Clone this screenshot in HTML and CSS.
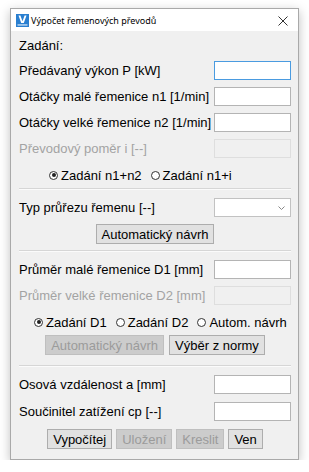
FILE: index.html
```html
<!DOCTYPE html>
<html lang="cs">
<head>
  <meta charset="UTF-8">
  <title>Výpočet řemenových převodů</title>
  <link rel="stylesheet" href="styles.css">
</head>
<body>
  <div class="okno">
    <div class="titulek">
      <svg class="ikona" width="13" height="13" viewBox="0 0 13 13">
        <rect x="0" y="0" width="13" height="13" fill="#2a7fd0"/>
        <path d="M2.5 1.5 L5.2 9 L7.8 9 L10.5 1.5 L8.6 1.5 L6.5 7.2 L4.4 1.5 Z" fill="#fff"/>
        <rect x="1.5" y="10.3" width="10" height="1.3" fill="#cfe3f7"/>
      </svg>
      <span class="nazev">Výpočet řemenových převodů</span>
      <span class="zavrit">
        <svg width="10" height="10" viewBox="0 0 10 10">
          <path d="M0.5 0.5 L9.5 9.5 M9.5 0.5 L0.5 9.5" stroke="#333" stroke-width="1"/>
        </svg>
      </span>
    </div>

    <div class="obsah">
      <div class="nadpis">Zadání:</div>

      <div class="radek">
        <label>Předávaný výkon P [kW]</label>
        <input type="text" class="pole aktivni">
      </div>
      <div class="radek">
        <label>Otáčky malé řemenice n1 [1/min]</label>
        <input type="text" class="pole">
      </div>
      <div class="radek">
        <label>Otáčky velké řemenice n2 [1/min]</label>
        <input type="text" class="pole">
      </div>
      <div class="radek vypnuto">
        <label>Převodový poměr i [--]</label>
        <input type="text" class="pole" disabled>
      </div>

      <div class="volby">
        <span class="volba prvni-n"><span class="kolecko zvoleno"></span>Zadání n1+n2</span>
        <span class="volba"><span class="kolecko"></span>Zadání n1+i</span>
      </div>

      <div class="oddel"></div>

      <div class="radek">
        <label>Typ průřezu řemenu [--]</label>
        <div class="vyber">
          <svg width="7" height="4" viewBox="0 0 7 4">
            <path d="M0.5 0.5 L3.5 3.5 L6.5 0.5" fill="none" stroke="#888" stroke-width="1"/>
          </svg>
        </div>
      </div>
      <div class="tlacitka">
        <button>Automatický návrh</button>
      </div>

      <div class="oddel"></div>

      <div class="radek">
        <label>Průměr malé řemenice D1 [mm]</label>
        <input type="text" class="pole">
      </div>
      <div class="radek vypnuto">
        <label>Průměr velké řemenice D2 [mm]</label>
        <input type="text" class="pole" disabled>
      </div>

      <div class="volby">
        <span class="volba prvni-d"><span class="kolecko zvoleno"></span>Zadání D1</span>
        <span class="volba"><span class="kolecko"></span>Zadání D2</span>
        <span class="volba"><span class="kolecko"></span>Autom. návrh</span>
      </div>

      <div class="tlacitka stred">
        <button disabled>Automatický návrh</button>
        <button>Výběr z normy</button>
      </div>

      <div class="oddel"></div>

      <div class="radek volny">
        <label>Osová vzdálenost a [mm]</label>
        <input type="text" class="pole">
      </div>
      <div class="radek volny">
        <label>Součinitel zatížení cp [--]</label>
        <input type="text" class="pole">
      </div>

      <div class="tlacitka dole">
        <button>Vypočítej</button>
        <button disabled>Uložení</button>
        <button disabled>Kreslit</button>
        <button>Ven</button>
      </div>
    </div>
  </div>
</body>
</html>
```

FILE: styles.css
```css
body {
  margin: 0;
  background-color: #ffffff;
  font-family: "Liberation Sans", Arial, sans-serif;
}

.okno {
  margin: 8px 0 0 10px;
  width: 287px;
  height: 450px;
  border: 1px solid #a9a9a9;
  background-color: #f0f0f0;
  box-shadow: 0 3px 10px rgba(0, 0, 0, 0.25);
  display: flex;
  flex-direction: column;
}

.titulek {
  height: 22px;
  background-color: #ffffff;
  display: flex;
  align-items: center;
  padding-left: 5px;
}

.ikona {
  margin-right: 2px;
}

.nazev {
  font-family: "Noto Sans", sans-serif;
  font-size: 9px;
  color: #000;
  flex: 1;
}

.zavrit {
  width: 30px;
  display: flex;
  justify-content: center;
  padding-top: 1px;
}

.obsah {
  padding: 0 7px 0 8px;
  font-size: 13px;
  color: #000;
}

.nadpis {
  height: 30px;
  line-height: 30px;
}

.radek {
  display: flex;
  justify-content: space-between;
  align-items: center;
  height: 19px;
  margin-bottom: 7px;
}

.radek.volny {
  margin-bottom: 8px;
}

.radek label {
  white-space: nowrap;
}

.pole {
  box-sizing: border-box;
  width: 77px;
  height: 19px;
  margin: 0;
  padding: 0 2px;
  border: 1px solid #b4b4b4;
  background-color: #ffffff;
  font-size: 12px;
  outline: none;
}

.pole.aktivni {
  border-color: #4a9be0;
}

.vypnuto label {
  color: #a3a3a3;
}

.pole:disabled {
  background-color: #f0f0f0;
  border-color: #dedede;
}

.vyber {
  box-sizing: border-box;
  width: 77px;
  height: 19px;
  border: 1px solid #c2c2c2;
  background-color: #ffffff;
  display: flex;
  justify-content: flex-end;
  align-items: center;
  padding-right: 5px;
}

.volby {
  display: flex;
  align-items: center;
  height: 20px;
}

.volba {
  display: flex;
  align-items: center;
  white-space: nowrap;
  margin-left: 9px;
}

.volba.prvni-n {
  margin-left: 30px;
}

.volba.prvni-d {
  margin-left: 15px;
}

.kolecko {
  box-sizing: border-box;
  width: 9px;
  height: 9px;
  margin-right: 3px;
  border: 1px solid #333;
  border-radius: 50%;
  background-color: #fff;
  display: flex;
  align-items: center;
  justify-content: center;
}

.kolecko.zvoleno::after {
  content: "";
  width: 4px;
  height: 4px;
  border-radius: 50%;
  background-color: #222;
}

.oddel {
  height: 1px;
  background-color: #d6d6d6;
  border-bottom: 1px solid #fbfbfb;
  margin: 3px 0 8px 0;
}

.tlacitka {
  display: flex;
  justify-content: center;
  gap: 5px;
  margin: 3px 0 6px 0;
}

.tlacitka.stred {
  margin-bottom: 10px;
}

.tlacitka.dole {
  gap: 4px;
  margin-top: 0;
}

button {
  height: 20px;
  margin: 0;
  padding: 0 5px;
  font-family: "Liberation Sans", Arial, sans-serif;
  font-size: 13px;
  color: #000;
  background-color: #e1e1e1;
  border: 1px solid #adadad;
  border-radius: 0;
}

button:disabled {
  color: #9b9b9b;
  background-color: #cccccc;
  border-color: #bfbfbf;
}
```
